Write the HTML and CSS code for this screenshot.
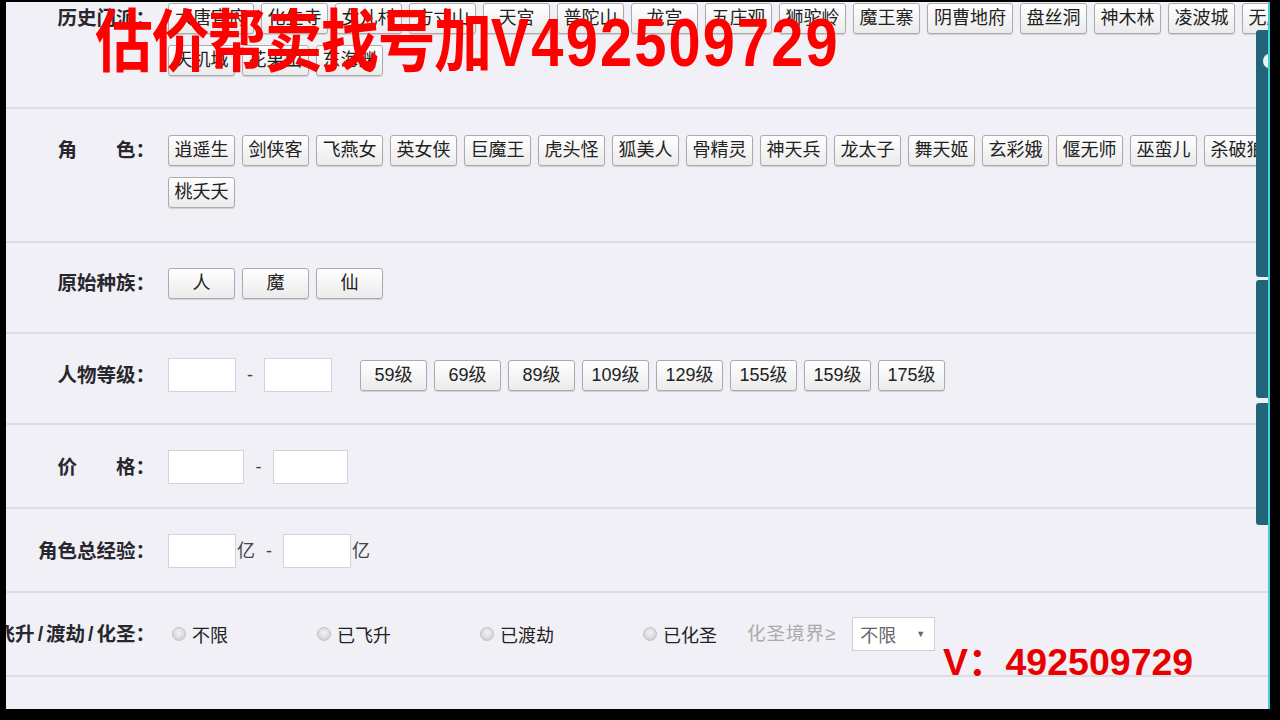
FILE: index.html
```html
<!DOCTYPE html>
<html lang="zh-CN">
<head>
<meta charset="utf-8">
<title>角色筛选</title>
<link rel="stylesheet" href="styles.css">
</head>
<body>
<div class="screen">
  <div class="page">
    <div class="form">
      <div class="row r-sect">
        <div class="label lh31">历史门派：</div>
        <div class="ctrl wrap">
          <button class="btn w4">大唐官府</button>
          <button class="btn">化生寺</button>
          <button class="btn">女儿村</button>
          <button class="btn">方寸山</button>
          <button class="btn">天宫</button>
          <button class="btn">普陀山</button>
          <button class="btn">龙宫</button>
          <button class="btn">五庄观</button>
          <button class="btn">狮驼岭</button>
          <button class="btn">魔王寨</button>
          <button class="btn w4">阴曹地府</button>
          <button class="btn">盘丝洞</button>
          <button class="btn">神木林</button>
          <button class="btn">凌波城</button>
          <button class="btn">无底洞</button>
          <button class="btn">天机城</button>
          <button class="btn">花果山</button>
          <button class="btn">东海渊</button>
        </div>
      </div>

      <div class="row r-role">
        <div class="label lh31">角　　色：</div>
        <div class="ctrl wrap">
          <button class="btn">逍遥生</button>
          <button class="btn">剑侠客</button>
          <button class="btn">飞燕女</button>
          <button class="btn">英女侠</button>
          <button class="btn">巨魔王</button>
          <button class="btn">虎头怪</button>
          <button class="btn">狐美人</button>
          <button class="btn">骨精灵</button>
          <button class="btn">神天兵</button>
          <button class="btn">龙太子</button>
          <button class="btn">舞天姬</button>
          <button class="btn">玄彩娥</button>
          <button class="btn">偃无师</button>
          <button class="btn">巫蛮儿</button>
          <button class="btn">杀破狼</button>
          <button class="btn">桃夭夭</button>
        </div>
      </div>

      <div class="row r-race">
        <div class="label lh31">原始种族：</div>
        <div class="ctrl wrap">
          <button class="btn">人</button>
          <button class="btn">魔</button>
          <button class="btn">仙</button>
        </div>
      </div>

      <div class="row r-level">
        <div class="label">人物等级：</div>
        <div class="ctrl">
          <input class="box w68" type="text">
          <span class="dash d28">-</span>
          <input class="box w68" type="text">
          <div class="lv-btns">
            <button class="btn">59级</button>
            <button class="btn">69级</button>
            <button class="btn">89级</button>
            <button class="btn">109级</button>
            <button class="btn">129级</button>
            <button class="btn">155级</button>
            <button class="btn">159级</button>
            <button class="btn">175级</button>
          </div>
        </div>
      </div>

      <div class="row r-price">
        <div class="label">价　　格：</div>
        <div class="ctrl">
          <input class="box w76" type="text">
          <span class="dash d29">-</span>
          <input class="box w75" type="text">
        </div>
      </div>

      <div class="row r-exp">
        <div class="label">角色总经验：</div>
        <div class="ctrl">
          <input class="box w68" type="text">
          <span class="unit">亿</span>
          <span class="dash d28">-</span>
          <input class="box w68" type="text">
          <span class="unit">亿</span>
        </div>
      </div>

      <div class="row r-fly">
        <div class="label">飞升<span class="slash">/</span>渡劫<span class="slash">/</span>化圣：</div>
        <div class="ctrl">
          <label class="radio-item"><input type="radio" name="fly" class="radio"><span>不限</span></label>
          <label class="radio-item"><input type="radio" name="fly" class="radio"><span>已飞升</span></label>
          <label class="radio-item"><input type="radio" name="fly" class="radio"><span>已渡劫</span></label>
          <label class="radio-item last"><input type="radio" name="fly" class="radio"><span>已化圣</span></label>
          <span class="hint">化圣境界≥</span>
          <div class="select"><span>不限</span><span class="arrow">▼</span></div>
        </div>
      </div>

      <div class="row r-empty"></div>
    </div>

    <div class="tab t1"><span class="tab-icon"></span></div>
    <div class="tab t2"></div>
    <div class="tab t3"></div>

    <div class="wm-top"><span class="wm-cjk">估价帮卖找号加</span><span class="wm-num">V492509729</span></div>
    <div class="wm-bottom">V：492509729</div>
  </div>
</div>
</body>
</html>
```

FILE: styles.css
```css
* {
  box-sizing: border-box;
}

html,
body {
  margin: 0;
  padding: 0;
}

body {
  width: 1280px;
  height: 720px;
  overflow: hidden;
  background: #000;
  font-family: "Liberation Sans", "Noto Sans CJK SC", sans-serif;
  color: #222;
}

.screen {
  padding: 2px 0 0 6px;
}

.page {
  position: relative;
  width: 1264px;
  height: 707px;
  background: #f0f0f6;
  border-right: 2px solid #43cfd7;
  overflow: hidden;
}

.form {
  width: 1319px;
}

.row {
  display: flex;
  align-items: flex-start;
  border-bottom: 2px solid #dcdce4;
}

.r-sect { padding: 1px 0 31px; }
.r-role { padding: 26px 0 33px; }
.r-race { padding: 25px 0 33px; }
.r-level { padding: 24px 0 31px; }
.r-price { padding: 25px 0 23px; }
.r-exp { padding: 25px 0 23px; }
.r-fly { padding: 24px 0 24px; }
.r-empty { border-bottom: none; height: 40px; }

.label {
  flex: none;
  width: 149px;
  display: flex;
  justify-content: flex-end;
  white-space: nowrap;
  font-family: "Liberation Sans", "Noto Sans CJK SC", sans-serif;
  font-weight: 700;
  font-size: 19.5px;
  line-height: 34px;
  color: #29272e;
}

.label.lh31 {
  line-height: 31px;
}

.label .slash {
  padding: 0 3px;
}

.ctrl {
  flex: none;
  width: 1157px;
  margin-left: 13px;
  display: flex;
  align-items: center;
}

.ctrl.wrap {
  flex-wrap: wrap;
  gap: 11px 7px;
}

.btn {
  display: block;
  height: 31px;
  min-width: 67px;
  margin: 0;
  padding: 0 5px;
  border: 1px solid #ababab;
  border-radius: 3px;
  background: linear-gradient(#ffffff, #ebebeb);
  box-shadow: 0 1px 1px rgba(0, 0, 0, 0.14);
  font-family: "Liberation Sans", "Noto Sans CJK SC", sans-serif;
  font-size: 18px;
  line-height: 29px;
  color: #222;
  text-align: center;
  white-space: nowrap;
}

.btn.w4 {
  min-width: 86px;
}

.box {
  display: block;
  height: 34px;
  margin: 0;
  padding: 0;
  background: #fff;
  border: 1px solid #d2d2d8;
  border-radius: 0;
}

.w68 { width: 68px; }
.w76 { width: 76px; }
.w75 { width: 75px; }

.dash {
  text-align: center;
  font-size: 18px;
  color: #444;
  line-height: 34px;
}

.d28 { width: 28px; }
.d29 { width: 29px; }

.unit {
  font-size: 18px;
  line-height: 34px;
  color: #444;
  margin-left: 1px;
}

.lv-btns {
  display: flex;
  gap: 7px;
  margin-left: 28px;
}

.radio-item {
  display: flex;
  align-items: center;
  height: 34px;
  margin-right: 85px;
  font-size: 18px;
  color: #222;
}

.radio-item.last {
  margin-right: 30px;
}

.radio {
  appearance: none;
  -webkit-appearance: none;
  width: 14px;
  height: 14px;
  margin: 0 6px 0 4px;
  border-radius: 50%;
  border: 1px solid #c2c2c2;
  background: radial-gradient(circle at 50% 40%, #f4f4f4 0%, #d9d9d9 60%, #c4c4c4 100%);
}

.hint {
  font-size: 18.5px;
  line-height: 34px;
  color: #ababab;
  letter-spacing: 1px;
}

.select {
  display: flex;
  align-items: center;
  justify-content: space-between;
  width: 83px;
  height: 34px;
  margin-left: 16px;
  padding: 0 9px 0 7px;
  background: #fff;
  border: 1px solid #d0d0d0;
  font-size: 18px;
  color: #666;
}

.select .arrow {
  font-size: 9px;
  color: #666;
}

.tab {
  position: absolute;
  right: 0;
  width: 12px;
  background: #22657b;
  border-radius: 3px 0 0 3px;
  overflow: hidden;
}

.t1 { top: 28px; height: 247px; }
.t2 { top: 278px; height: 118px; }
.t3 { top: 401px; height: 122px; }

.tab-icon {
  position: absolute;
  top: 24px;
  right: -7px;
  width: 12px;
  height: 14px;
  border-radius: 50%;
  background: #e9f4f6;
}

.wm-top {
  position: absolute;
  left: 89px;
  top: 6px;
  white-space: nowrap;
  font-family: "Liberation Sans", "Noto Sans CJK SC", sans-serif;
  font-weight: 700;
  font-size: 68px;
  line-height: 1;
  color: #ff0000;
  transform: scaleX(0.85);
  transform-origin: 0 0;
}

.wm-cjk {
  letter-spacing: -1.5px;
}

.wm-num {
  letter-spacing: 2.5px;
}

.wm-bottom {
  position: absolute;
  left: 937px;
  top: 642px;
  white-space: nowrap;
  font-family: "Liberation Sans", "Noto Sans CJK SC", sans-serif;
  font-weight: 700;
  font-size: 37.5px;
  line-height: 1;
  color: #e80000;
}
```
